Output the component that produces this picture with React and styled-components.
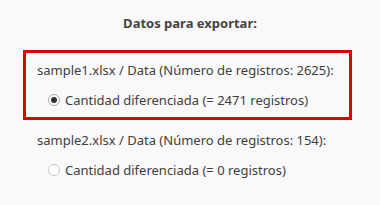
import React from 'react';
import styled, { createGlobalStyle } from 'styled-components';

const Global = createGlobalStyle`
  html, body {
    margin: 0;
    padding: 0;
    background: #f9f9f9;
  }
  body {
    font-family: "Noto Sans", "Open Sans", sans-serif;
    color: #404040;
  }
`;

const Page = styled.div`
  width: 380px;
  height: 205px;
  box-sizing: border-box;
  padding: 14px 28px 0 23px;
`;

const Title = styled.div`
  font-size: 13px;
  font-weight: bold;
  text-align: center;
  color: #444;
  line-height: 18px;
  padding-left: 5px;
`;

const Group = styled.div`
  box-sizing: border-box;
  width: 329px;
  margin-top: ${p => p.first ? '18px' : '0'};
  padding: 8px 11px 8px 11px;
  border: 3px solid ${p => p.selected ? '#dd0000' : 'transparent'};
`;

const Caption = styled.div`
  font-size: 13px;
  line-height: 18px;
  color: #404040;
`;

const Option = styled.label`
  display: flex;
  align-items: center;
  margin-top: 12px;
  padding-left: 11px;
  font-size: 13px;
  line-height: 18px;
  color: #404040;
`;

const Dot = styled.span`
  width: 12px;
  height: 12px;
  box-sizing: border-box;
  border-radius: 50%;
  border: 1px solid ${p => p.checked ? '#aaa' : '#c8c8c8'};
  background: #fff;
  margin-right: 5px;
  display: flex;
  align-items: center;
  justify-content: center;
  &::after {
    content: '';
    display: ${p => p.checked ? 'block' : 'none'};
    width: 6px;
    height: 6px;
    border-radius: 50%;
    background: #333;
  }
`;

const groups = [
  { file: 'sample1.xlsx / Data (Número de registros: 2625):', option: 'Cantidad diferenciada (= 2471 registros)', checked: true },
  { file: 'sample2.xlsx / Data (Número de registros: 154):', option: 'Cantidad diferenciada (= 0 registros)', checked: false },
];

export default function App() {
  return (
    <Page>
      <Global />
      <Title>Datos para exportar:</Title>
      {groups.map((g, i) => (
        <Group key={i} first={i === 0} selected={g.checked}>
          <Caption>{g.file}</Caption>
          <Option>
            <Dot checked={g.checked} />
            {g.option}
          </Option>
        </Group>
      ))}
    </Page>
  );
}
